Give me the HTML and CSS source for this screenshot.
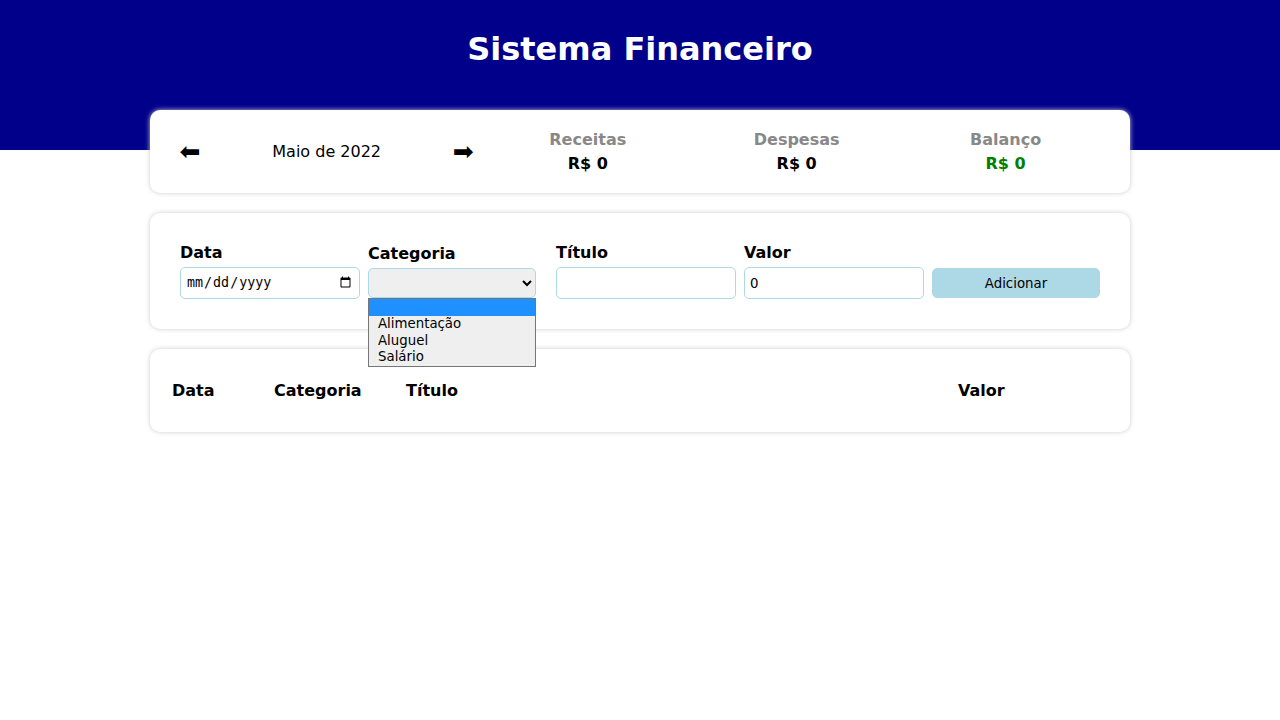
FILE: index.html
```html
<!DOCTYPE html>
<html lang="pt-BR">
<head>
<meta charset="utf-8">
<title>Sistema Financeiro</title>
<link rel="stylesheet" href="styles.css">
</head>
<body>
<header class="header">
  <h1 class="header-text">Sistema Financeiro</h1>
</header>
<main class="body">
  <section class="info-area">
    <div class="month-area">
      <div class="month-arrow">⬅</div>
      <div class="month-title">Maio de 2022</div>
      <div class="month-arrow">➡</div>
    </div>
    <div class="resume-area">
      <div class="resume-item">
        <div class="resume-title">Receitas</div>
        <div class="resume-info">R$ 0</div>
      </div>
      <div class="resume-item">
        <div class="resume-title">Despesas</div>
        <div class="resume-info">R$ 0</div>
      </div>
      <div class="resume-item">
        <div class="resume-title">Balanço</div>
        <div class="resume-info positive">R$ 0</div>
      </div>
    </div>
  </section>

  <section class="input-area">
    <label class="input-label">
      <div class="input-title">Data</div>
      <input class="input input-date" type="date">
    </label>
    <label class="input-label">
      <div class="input-title">Categoria</div>
      <select class="select">
        <option></option>
        <option>Alimentação</option>
        <option>Aluguel</option>
        <option>Salário</option>
      </select>
      <div class="listbox">
        <div class="opt selected">&nbsp;</div>
        <div class="opt">Alimentação</div>
        <div class="opt">Aluguel</div>
        <div class="opt">Salário</div>
      </div>
    </label>
    <label class="input-label">
      <div class="input-title">Título</div>
      <input class="input" type="text">
    </label>
    <label class="input-label">
      <div class="input-title">Valor</div>
      <input class="input" type="number" value="0">
    </label>
    <label class="input-label">
      <div class="input-title">&nbsp;</div>
      <button class="button" type="button">Adicionar</button>
    </label>
  </section>

  <section class="table-area">
    <table class="table">
      <thead>
        <tr>
          <th class="th col-date">Data</th>
          <th class="th col-cat">Categoria</th>
          <th class="th">Título</th>
          <th class="th col-val">Valor</th>
        </tr>
      </thead>
      <tbody></tbody>
    </table>
  </section>
</main>
</body>
</html>
```

FILE: styles.css
```css
body {
  margin: 0;
  font-family: "DejaVu Sans", sans-serif;
  color: #000;
  background: #fff;
}

.header {
  background-color: #00008b;
  height: 150px;
  text-align: center;
}

.header-text {
  margin: 0;
  padding: 30px 0 0 0;
  color: #fff;
  font-size: 32px;
  font-weight: bold;
}

.body {
  max-width: 980px;
  margin: auto;
  margin-bottom: 50px;
}

.info-area {
  background-color: #fff;
  box-shadow: 0 0 5px #ccc;
  border-radius: 10px;
  padding: 20px;
  margin-top: -40px;
  display: flex;
  align-items: center;
}

.month-area {
  flex: 1;
  display: flex;
  align-items: center;
}

.month-arrow {
  width: 40px;
  text-align: center;
  font-size: 25px;
  cursor: pointer;
}

.month-title {
  flex: 1;
  text-align: center;
}

.resume-area {
  flex: 2;
  display: flex;
}

.resume-item {
  flex: 1;
}

.resume-title {
  text-align: center;
  font-weight: bold;
  color: #888;
  margin-bottom: 5px;
}

.resume-info {
  text-align: center;
  font-weight: bold;
  color: #000;
}

.resume-info.positive {
  color: green;
}

.input-area {
  background-color: #fff;
  box-shadow: 0 0 5px #ccc;
  border-radius: 10px;
  padding: 20px;
  margin-top: 20px;
  display: flex;
  align-items: center;
}

.input-label {
  flex: 1;
  margin: 10px;
  position: relative;
}

.input-title {
  font-weight: bold;
  margin-bottom: 5px;
}

.input,
.select,
.button {
  font-family: "DejaVu Sans", sans-serif;
  font-size: 13.33px;
}

.input {
  width: 100%;
  height: 30px;
  padding: 0 5px;
  border: 1px solid lightblue;
  border-radius: 5px;
}

.input-date {
  font-family: "DejaVu Sans Mono", monospace;
}

.select {
  width: 100%;
  height: 30px;
  padding: 0 5px;
  border: 1px solid lightblue;
  border-radius: 5px;
  background-color: #efefef;
}

.button {
  width: 100%;
  height: 30px;
  padding: 0 5px;
  border: 1px solid lightblue;
  border-radius: 5px;
  background-color: lightblue;
  color: #000;
  cursor: pointer;
}

.listbox {
  position: absolute;
  left: 0;
  right: 0;
  top: 100%;
  border: 1px solid #767676;
  background: #efefef;
  font-family: "DejaVu Sans", sans-serif;
  font-size: 13.33px;
  z-index: 5;
}

.opt {
  height: 16.75px;
  line-height: 16.75px;
  padding: 0 9px;
  white-space: nowrap;
}

.opt.selected {
  background: #1e90ff;
  color: #fff;
}

.table-area {
  background-color: #fff;
  box-shadow: 0 0 5px #ccc;
  border-radius: 10px;
  padding: 20px;
  margin-top: 20px;
}

.table {
  width: 100%;
}

.th {
  padding: 10px 0;
  text-align: left;
}

.col-date {
  width: 100px;
}

.col-cat {
  width: 130px;
}

.col-val {
  width: 150px;
}
```
